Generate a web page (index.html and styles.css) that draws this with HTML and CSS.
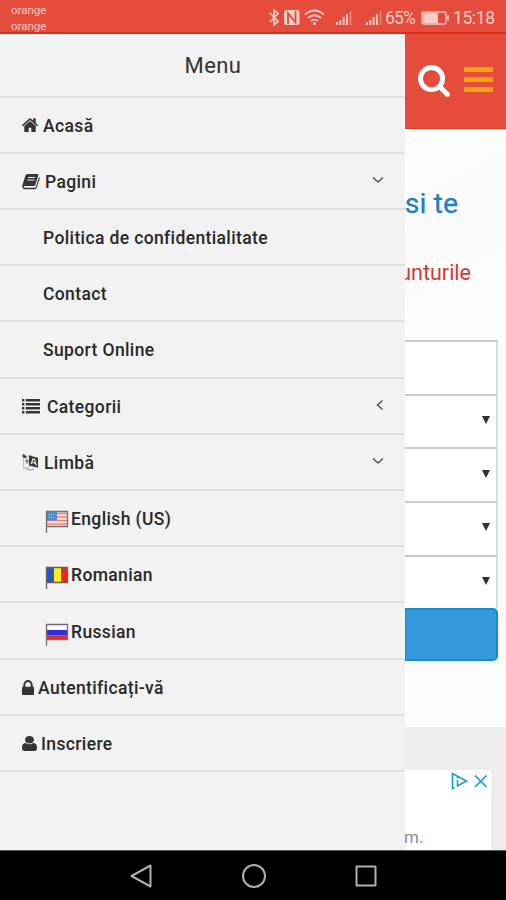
FILE: index.html
```html
<!DOCTYPE html>
<html lang="ro">
<head>
<meta charset="utf-8">
<title>Menu</title>
<link rel="stylesheet" href="styles.css">
</head>
<body>
<header class="status">
  <div class="carriers"><span>orange</span><span>orange</span></div>
  <svg class="status-icons" width="116" height="20" viewBox="0 0 116 20" fill="none" stroke="#f9cdc7">
    <path d="M2 5l8 8.500-4 3.500V2l4 3.500L2 14" stroke-width="1.700"/>
    <rect x="16" y="2" width="15.500" height="15" rx="2.500" fill="#f9cdc7" stroke="none"/>
    <path d="M20 16V5l7.500 9.500V3" stroke="#e64c3c" stroke-width="1.800"/>
    <path d="M37 6.500q9.500-8 19 0M40 10q6.500-5.500 13 0M43 13q3.500-2.500 7 0" stroke-width="1.700"/>
    <circle cx="46.500" cy="15.500" r="1.500" fill="#f9cdc7" stroke="none"/>
    <path d="M69 17v-3M72.300 17v-5M75.600 17V9M78.900 17V6" stroke-width="2"/>
    <path d="M82.500 17V3" stroke="#ee8c80" stroke-width="1.500"/>
    <path d="M99 17v-3M102.300 17v-5M105.600 17V9M108.900 17V6" stroke-width="2"/>
    <path d="M112.500 17V3" stroke="#ee8c80" stroke-width="1.500"/>
  </svg>
  <span class="percent">65%</span>
  <svg class="battery" width="28" height="14" viewBox="0 0 28 14" fill="none" stroke="#f9cdc7">
    <rect x="1" y="1" width="24" height="12" rx="1.500" stroke-width="1.300"/>
    <path d="M27 4.500v5" stroke-width="1.700"/>
    <rect x="2" y="2" width="15" height="10" fill="#f9cdc7" stroke="none"/>
  </svg>
  <span class="clock">15:18</span>
</header>

<div class="main">
  <nav class="drawer">
    <h1 class="title">Menu</h1>
    <ul class="menu">
      <li class="item">
        <svg class="icon" width="16" height="14" viewBox="90 240 1612 1296" preserveAspectRatio="none"><path d="M1472 992v480q0 26-19 45t-45 19h-384v-384h-256v384h-384q-26 0-45-19t-19-45v-480q0-1 .5-3t.5-3l575-474 575 474q1 2 1 6zm223-69l-62 74q-8 9-21 11h-3q-13 0-21-7l-692-577-692 577q-12 8-24 7-13-2-21-11l-62-74q-8-10-7-23.500t11-21.500l719-599q32-26 76-26t76 26l244 204v-195q0-14 9-23t23-9h192q14 0 23 9t9 23v408l219 182q10 8 11 21.500t-7 23.500z"/></svg>
        <span class="label">Acasă</span>
      </li>
      <li class="item">
        <svg class="icon" width="18" height="17" viewBox="0 0 18 17"><path fill-rule="evenodd" d="M5.500 1h9.800q1.500 0 1 1.500L13.200 12q-.4 1-1.500 1H3q-1.200 0-1.400.8.200 1 1.400 1h9.500q1 0 1.300-.9L17 4q1 .6.700 1.700l-3 9q-.5 1.500-2.200 1.500H3Q.8 16.200.3 14q-.2-1 .1-2L3.500 2.500Q4 1 5.500 1zM6.300 4l-.3 1h7l.3-1zM5.500 6.600l-.3 1h7l.3-1z"/></svg>
        <span class="label">Pagini</span>
        <svg class="chevron" width="12" height="8" viewBox="0 0 12 8"><path d="M1 1.500l5 4.500 5-4.500"/></svg>
      </li>
      <li class="item sub"><span class="label">Politica de confidentialitate</span></li>
      <li class="item sub"><span class="label">Contact</span></li>
      <li class="item sub"><span class="label">Suport Online</span></li>
      <li class="item">
        <svg class="icon wide" width="18" height="15" viewBox="0 0 19 15" preserveAspectRatio="none"><path d="M0 0h2.500v2.500H0zM4 0h15v2.500H4zM0 4h2.500v2.500H0zM4 4h15v2.500H4zM0 8h2.500v2.500H0zM4 8h15v2.500H4zM0 12h2.500v2.500H0zM4 12h15v2.500H4z"/></svg>
        <span class="label">Categorii</span>
        <svg class="chevron" width="8" height="12" viewBox="0 0 8 12"><path d="M6.500 1.500L1.500 6l5 4.500"/></svg>
      </li>
      <li class="item">
        <svg class="icon" width="17" height="18" viewBox="0 0 17 18"><path d="M1.500 4.500L9 2v11l-7.500 2.500z" fill="#f2f2f2" stroke="#aaa" stroke-width=".7"/><path d="M1 1.500l3 1.500v2L1 4zM3 8h4M5 6v5" stroke="#444" stroke-width=".8"/><path d="M7 2.500l9 2.300v10L7 12.500z"/><path d="M9 11l2-5 1.500.3 1.800 6.300M10 9.500l3.300.8" fill="none" stroke="#f2f2f2" stroke-width="1.100"/><path d="M4 15.500q4 3 8 .5" fill="none" stroke="#777" stroke-width=".8"/></svg>
        <span class="label">Limbă</span>
        <svg class="chevron" width="12" height="8" viewBox="0 0 12 8"><path d="M1 1.500l5 4.500 5-4.500"/></svg>
      </li>
      <li class="item flagged">
        <svg class="flag" width="24" height="24" viewBox="0 0 24 24"><path d="M2 2h20v14H2z" fill="#fbe4df"/><path d="M2 3.500h20M2 7h20M2 10.500h20M2 14h20" stroke="#ef806f" stroke-width="1.700"/><path d="M2 2h10v8.500H2z" fill="#4e8bd8"/><path d="M4 4.500h6M4 7.500h6" stroke="#b7d0f0" stroke-dasharray="1 1"/><path d="M1.500 23V1.500h21v15h-21" fill="none" stroke="#766f70" stroke-width="1.300"/></svg>
        <span class="label">English (US)</span>
      </li>
      <li class="item flagged">
        <svg class="flag" width="24" height="24" viewBox="0 0 24 24"><path d="M2 2h7v14H2z" fill="#2955c8"/><path d="M9 2h7v14H9z" fill="#ffed16"/><path d="M16 2h6v14h-6z" fill="#e72b21"/><path d="M1.500 23V1.500h21v15h-21" fill="none" stroke="#665e60" stroke-width="1.300"/></svg>
        <span class="label">Romanian</span>
      </li>
      <li class="item flagged">
        <svg class="flag" width="24" height="24" viewBox="0 0 24 24"><path d="M2 2h20v5H2z" fill="#fafaff"/><path d="M2 7h20v5.500H2z" fill="#332de0"/><path d="M2 12.500h20V16H2z" fill="#e32931"/><path d="M1.500 23V1.500h21v15h-21" fill="none" stroke="#776a72" stroke-width="1.300"/></svg>
        <span class="label">Russian</span>
      </li>
      <li class="item">
        <svg class="icon tight" width="12" height="15" viewBox="320 128 1152 1408" preserveAspectRatio="none"><path d="M640 768h512v-192q0-106-75-181t-181-75-181 75-75 181v192zm832 96v576q0 40-28 68t-68 28h-960q-40 0-68-28t-28-68v-576q0-40 28-68t68-28h32v-192q0-184 132-316t316-132 316 132 132 316v192h32q40 0 68 28t28 68z"/></svg>
        <span class="label">Autentificați-vă</span>
      </li>
      <li class="item">
        <svg class="icon tight" width="15" height="15" viewBox="256 128 1280 1536" preserveAspectRatio="none"><path d="M1536 1399q0 109-62.500 187t-150.500 78h-854q-88 0-150.500-78t-62.500-187q0-85 8.500-160.500t31.500-152 58.500-131 94-89 134.500-34.500q131 128 313 128t313-128q76 0 134.500 34.500t94 89 58.500 131 31.500 152 8.500 160.500zm-256-887q0 159-112.500 271.500t-271.500 112.500-271.500-112.500-112.500-271.500 112.500-271.500 271.500-112.500 271.500 112.500 112.500 271.500z"/></svg>
        <span class="label">Inscriere</span>
      </li>
    </ul>
  </nav>

  <section class="page">
    <div class="topbar">
      <svg width="32" height="32" viewBox="64 128 1664 1664" fill="#fff"><path d="M1216 832q0-185-131.500-316.500t-316.500-131.500-316.500 131.500-131.500 316.500 131.500 316.500 316.500 131.500 316.500-131.500 131.500-316.500zm512 832q0 52-38 90t-90 38q-54 0-90-38l-343-342q-179 124-399 124-143 0-273.500-55.500t-225-150-150-225-55.500-273.500 55.500-273.500 150-225 225-150 273.500-55.500 273.500 55.500 225 150 150 225 55.500 273.500q0 220-124 399l343 343q37 37 37 90z"/></svg>
      <div class="burger"><i></i><i></i><i></i></div>
    </div>
    <div class="hero">
      <p class="headline">si te</p>
      <p class="tagline">unturile</p>
    </div>
    <div class="form">
      <div class="field"></div>
      <div class="field select"><i class="caret"></i></div>
      <div class="field select"><i class="caret"></i></div>
      <div class="field select"><i class="caret"></i></div>
      <div class="field select"><i class="caret"></i></div>
      <div class="submit"></div>
    </div>
    <div class="footer">
      <div class="ad">
        <svg class="ad-icons" width="38" height="18" viewBox="0 0 38 18" fill="none" stroke="#189fcb" stroke-width="1.600"><path d="M3.500 16l-2 .5v-15L15.500 9l-9 5V8M6.500 5v1.500"/><path d="M24 3.500l11.500 11.500M35.500 3.500L24 15"/></svg>
        <span class="ad-text">m.</span>
      </div>
    </div>
  </section>
</div>

<footer class="navbar">
  <svg width="22" height="24" viewBox="0 0 22 24"><path d="M20.500 1.500v21L1.500 12z"/></svg>
  <svg width="26" height="26" viewBox="0 0 26 26"><circle cx="13" cy="13" r="11"/></svg>
  <svg width="22" height="22" viewBox="0 0 22 22"><path d="M1.500 1.500h19v19h-19z"/></svg>
</footer>
</body>
</html>
```

FILE: styles.css
```css
* { box-sizing: border-box; }
body {
  margin: 0;
  width: 506px;
  height: 900px;
  display: flex;
  flex-direction: column;
  overflow: hidden;
  font-family: Roboto, "Liberation Sans", sans-serif;
  background: #fff;
}
p, h1, ul { margin: 0; padding: 0; }
svg { display: block; flex: none; }

.status {
  height: 34px;
  display: flex;
  align-items: center;
  padding-left: 11px;
  background: #e64c3c;
  border-bottom: 2px solid #df2b17;
  color: #f9cdc7;
}
.carriers {
  width: 257px;
  display: flex;
  flex-direction: column;
  font-size: 11.5px;
  line-height: 16px;
  padding-top: 3px;
}
.status-icons { margin-top: 3px; }
.percent { width: 36px; margin: 4px 0 0 1px; font-size: 17.5px; letter-spacing: -.8px; }
.battery { margin-top: 4px; }
.clock { margin: 4px 0 0 4px; font-size: 17.5px; letter-spacing: -.4px; }

.main { height: 816px; display: flex; }
.drawer { width: 405px; flex: none; background: #f2f2f2; }
.title {
  height: 63.5px;
  padding-left: 21px;
  border-bottom: 2px solid #e0e0e0;
  text-align: center;
  font-size: 22px;
  font-weight: 400;
  line-height: 63px;
  letter-spacing: .4px;
  color: #333;
}
.menu { list-style: none; }
.item {
  height: 56.22px;
  display: flex;
  align-items: center;
  padding: 1px 21px 0 22px;
  border-bottom: 2px solid #e0e0e0;
  color: #292929;
  font-size: 17.5px;
  font-weight: 500;
  white-space: nowrap;
}
.sub { padding-left: 43px; }
.flagged { padding-left: 45px; }
.flag { margin: 7px 2px 0 0; }
.icon { fill: #353535; margin-right: 5px; }
.wide { margin-right: 7px; }
.tight { margin-right: 4px; }
.label { letter-spacing: .37px; padding-top: 1px; }
.chevron { margin: -2px 0 0 auto; fill: none; stroke: #555; stroke-width: 1.5; }

.page { flex: 1; min-width: 0; display: flex; flex-direction: column; overflow: hidden; }
.topbar {
  height: 95px;
  display: flex;
  align-items: center;
  gap: 14px;
  padding-left: 13px;
  background: #e64c3c;
  border-bottom: 1px solid #df3928;
}
.burger { display: flex; flex-direction: column; gap: 5px; margin-top: -3px; }
.burger i { width: 29px; height: 5px; background: #f2a311; }
.hero {
  height: 211px;
  display: flex;
  flex-direction: column;
  align-items: flex-end;
  background: linear-gradient(150deg, #fff, #f9f9f9 45%, #fdfdfd 80%);
}
.headline { margin: 56px 48px 0 0; font-size: 28.5px; line-height: 38px; color: #257fb9; -webkit-text-stroke: .3px #257fb9; white-space: nowrap; }
.tagline { margin: 34px 35px 0 0; font-size: 21.5px; line-height: 31px; color: #d43b32; }
.form { height: 387px; padding-right: 8px; background: #fdfdfd; }
.field {
  height: 53.7px;
  display: flex;
  align-items: center;
  justify-content: flex-end;
  padding-right: 6px;
  background: #fff;
  border-top: 2px solid #ccc;
  border-right: 2px solid #ddd;
}
.caret { border: 4px solid transparent; border-top: 8px solid #303030; border-bottom: 0; margin-top: -3px; }
.submit { height: 53px; background: #3498db; border: 2px solid #178bd0; border-left-width: 1px; border-radius: 0 5px 5px 0; }
.footer { flex: 1; padding-top: 43px; background: #efedee; }
.ad { height: 80px; width: 86px; display: flex; flex-direction: column; justify-content: space-between; background: #fff; }
.ad-icons { align-self: flex-end; margin: 2px 2px 0 0; }
.ad-text { margin-left: -1px; color: #8b8b8b; font-size: 17px; line-height: 25px; }

.navbar {
  height: 50px;
  display: flex;
  align-items: center;
  padding-left: 130px;
  background: #000;
  border-top: 1px solid #555;
}
.navbar svg { fill: none; stroke: #b0b0b0; stroke-width: 2; stroke-linejoin: round; }
.navbar svg + svg { margin-left: 88.5px; }
.navbar svg + svg + svg { margin-left: 88px; }
```
